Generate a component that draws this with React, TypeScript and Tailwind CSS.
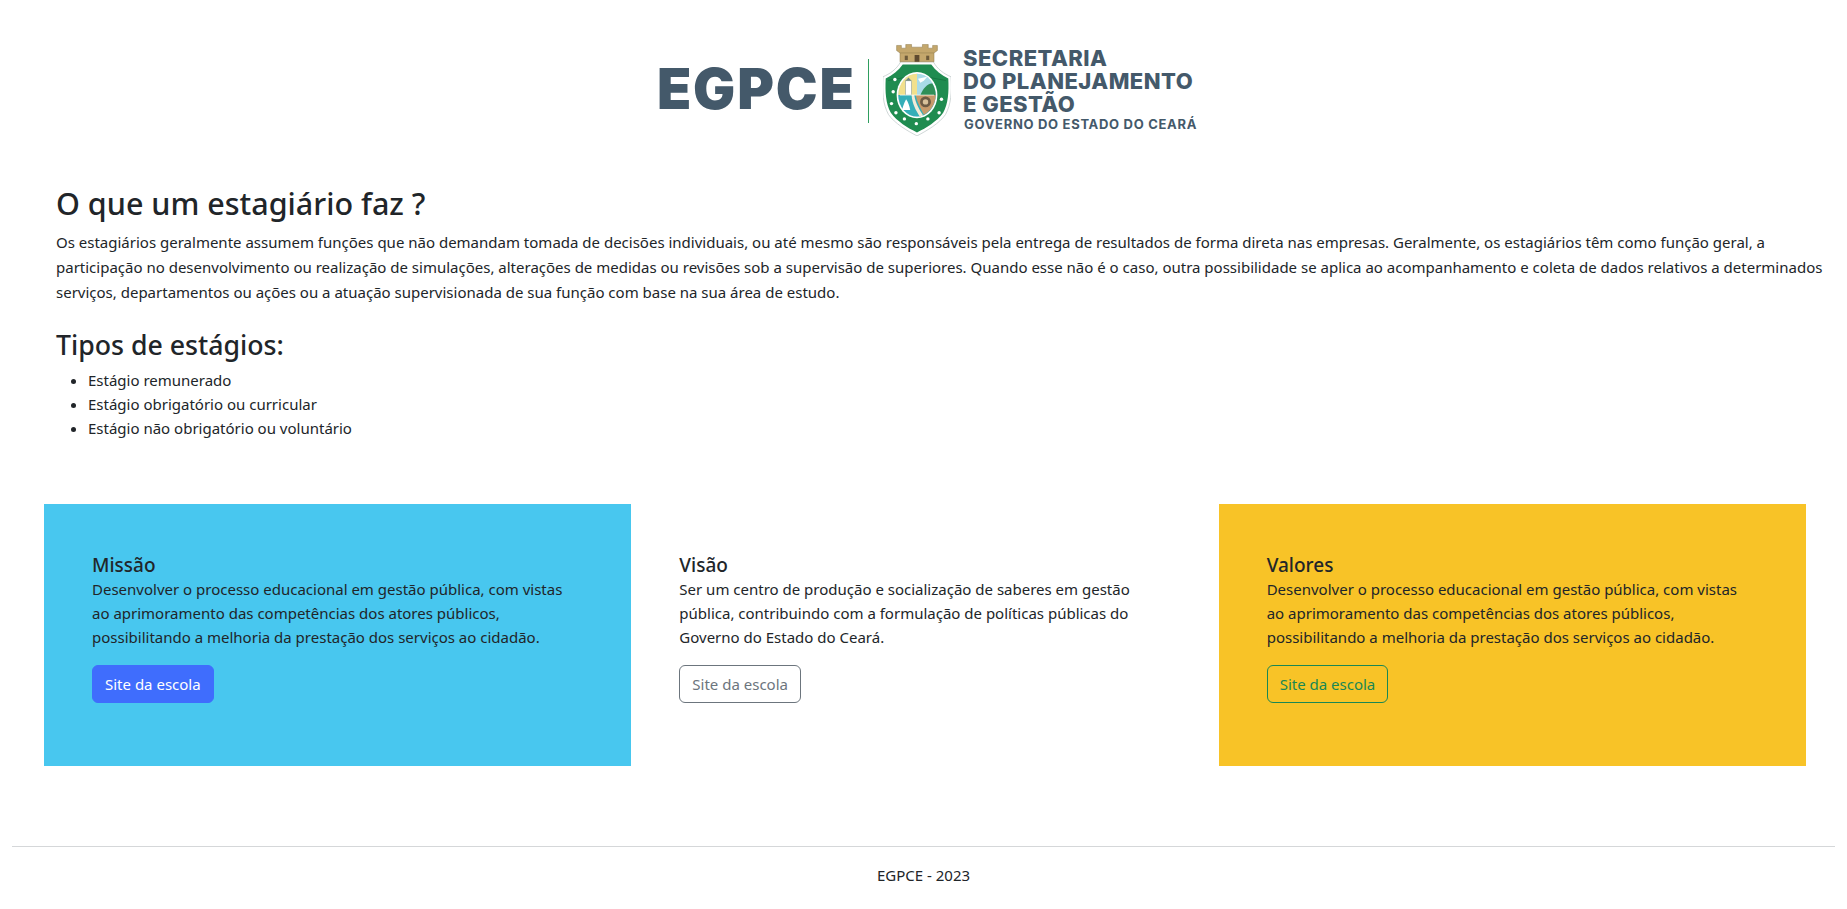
const font = { fontFamily: '"Noto Sans", "Open Sans", sans-serif' }

function Crest() {
  return (
    <svg width="68" height="92" viewBox="40 28 200 270" className="shrink-0">
      <path d="M40 124 C60 116 80 102 92 80 L188 80 C200 102 220 116 240 124 C243 170 240 205 224 235 C205 262 170 282 140 298 C110 282 75 262 56 235 C40 205 37 170 40 124 Z" fill="#fff" stroke="#b9c4c4" strokeWidth="2" />
      <path d="M48 129 C68 120 86 106 98 88 L182 88 C194 106 212 120 232 129 C234 170 232 202 217 230 C198 256 168 274 140 288 C112 274 82 256 63 230 C48 202 46 170 48 129 Z" fill="#1f8c50" />
      <path d="M55 135 L110 125 M225 135 L170 125" stroke="#156b3c" strokeWidth="2" />
      <path d="M80 32 L94 32 L94 40 L107 40 L107 29 L124 29 L124 37 L156 37 L156 29 L173 29 L173 40 L186 40 L186 32 L200 32 L200 47 L190 54 L190 80 L90 80 L90 54 L80 47 Z" fill="#c4a76c" stroke="#8f7a4c" strokeWidth="1.5" />
      <path d="M90 54 H190" stroke="#8f7a4c" strokeWidth="1.5" />
      <rect x="104" y="62" width="9" height="13" fill="#6d5a3a" />
      <rect x="133" y="60" width="14" height="20" fill="#5e4a30" />
      <rect x="167" y="62" width="9" height="13" fill="#6d5a3a" />
      <ellipse cx="140" cy="178" rx="60" ry="68" fill="#fff" />
      <ellipse cx="140" cy="178" rx="55" ry="63" fill="#bfe3e8" />
      <path d="M85 178 A55 63 0 0 1 140 115 L140 178 Z" fill="#f2e08c" />
      <path d="M140 115 A55 63 0 0 1 195 178 L140 178 Z" fill="#a9dbe8" />
      <path d="M150 178 C158 158 172 142 185 144 C192 155 195 166 195 178 Z" fill="#2f8f58" />
      <path d="M143 130 L170 124 L160 136 L150 142 Z" fill="#fff" />
      <rect x="106" y="136" width="18" height="42" fill="#fff" stroke="#7d8f8c" strokeWidth="1.5" />
      <path d="M106 136 L115 126 L124 136 Z" fill="#6f8a86" />
      <path d="M85 178 L195 178 A55 63 0 0 1 140 241 A55 63 0 0 1 85 178 Z" fill="#35aeb8" />
      <path d="M136 178 H195 C195 205 178 228 160 236 C150 215 140 200 136 178 Z" fill="#c69a6b" />
      <path d="M132 178 C136 205 148 222 158 238 L148 241 C136 222 126 204 124 178 Z" fill="#f3ead6" />
      <circle cx="165" cy="198" r="16" fill="#6d5a44" />
      <circle cx="165" cy="198" r="8" fill="#d8c09a" />
      <path d="M108 190 C100 205 98 216 96 222 L120 222 C118 210 114 198 108 190 Z" fill="#fff" />
      <path d="M90 178 L190 178" stroke="#fff" strokeWidth="2" />
      <g fill="#fff">
        <circle cx="75" cy="132" r="5" />
        <circle cx="70" cy="168" r="5" />
        <circle cx="65" cy="203" r="5" />
        <circle cx="78" cy="230" r="5" />
        <circle cx="103" cy="248" r="5" />
        <circle cx="138" cy="262" r="5" />
        <circle cx="172" cy="248" r="5" />
        <circle cx="205" cy="230" r="5" />
        <circle cx="212" cy="190" r="5" />
      </g>
    </svg>
  )
}

function Logo() {
  return (
    <div className="flex pl-[657px] pt-[44px] h-[135px]">
      <span className="mt-[17px] w-[194px] whitespace-nowrap text-[#44596a] font-black text-[56px] leading-[56px] tracking-[1.8px]" style={{ fontFamily: 'Inter, sans-serif' }}>
        EGPCE
      </span>
      <div className="w-px h-[64px] mt-[15px] ml-[17px] mr-[14px] bg-[#2f9e5f]" />
      <Crest />
      <div className="ml-[12px] text-[#44596a] font-extrabold whitespace-nowrap" style={{ fontFamily: 'Inter, sans-serif' }}>
        <div className="text-[22px] leading-[23px] mt-[3px] tracking-[0.45px]">SECRETARIA</div>
        <div className="text-[22px] leading-[23px] tracking-[0.45px]">DO PLANEJAMENTO</div>
        <div className="text-[22px] leading-[23px] tracking-[0.45px]">E GESTÃO</div>
        <div className="text-[13px] leading-[16px] font-bold ml-[1px] tracking-[0.7px]">GOVERNO DO ESTADO DO CEARÁ</div>
      </div>
    </div>
  )
}

function Card({ title, lines, bg, button }: { title: string; lines: string[]; bg: string; button: string }) {
  return (
    <div className={`flex-1 h-[262px] px-[48px] pt-[50px] ${bg}`}>
      <h5 className="text-[19px] leading-[23px] font-medium">{title}</h5>
      <p className="text-[15px] leading-[24px]">
        {lines.map((l) => (
          <span key={l} className="block whitespace-nowrap">{l}</span>
        ))}
      </p>
      <a className={`inline-block mt-[16px] h-[38px] px-[12px] leading-[36px] text-[15px] rounded-[6px] border ${button}`}>
        Site da escola
      </a>
    </div>
  )
}

const missao = [
  'Desenvolver o processo educacional em gestão pública, com vistas',
  'ao aprimoramento das competências dos atores públicos,',
  'possibilitando a melhoria da prestação dos serviços ao cidadão.',
]

export default function App() {
  return (
    <div className="min-h-[909px] bg-white text-[#212529]" style={font}>
      <Logo />
      <section className="pl-[56px] pr-[10px] pt-[48px]">
        <h2 className="text-[30.5px] leading-[40px] font-medium">O que um estagiário faz ?</h2>
        <p className="mt-[7px] text-[15px] leading-[25px]">
          Os estagiários geralmente assumem funções que não demandam tomada de decisões individuais, ou até mesmo são responsáveis pela entrega de resultados de forma direta nas empresas. Geralmente, os estagiários têm como função geral, a participação no desenvolvimento ou realização de simulações, alterações de medidas ou revisões sob a supervisão de superiores. Quando esse não é o caso, outra possibilidade se aplica ao acompanhamento e coleta de dados relativos a determinados serviços, departamentos ou ações ou a atuação supervisionada de sua função com base na sua área de estudo.
        </p>
        <h3 className="mt-[23px] text-[26.7px] leading-[34px] font-medium">Tipos de estágios:</h3>
        <ul className="mt-[6px] list-disc pl-[32px] text-[15px] leading-[24px]">
          <li>Estágio remunerado</li>
          <li>Estágio obrigatório ou curricular</li>
          <li>Estágio não obrigatório ou voluntário</li>
        </ul>
      </section>
      <section className="flex mx-[44px] mt-[64px] w-[1762px]">
        <Card title="Missão" lines={missao} bg="bg-[#48c7ef]" button="bg-[#3f6dfd] border-[#3f6dfd] text-white" />
        <Card
          title="Visão"
          lines={[
            'Ser um centro de produção e socialização de saberes em gestão',
            'pública, contribuindo com a formulação de políticas públicas do',
            'Governo do Estado do Ceará.',
          ]}
          bg="bg-white"
          button="border-[#6c757d] text-[#6c757d]"
        />
        <Card title="Valores" lines={missao} bg="bg-[#f8c327]" button="border-[#198754] text-[#198754]" />
      </section>
      <hr className="mx-[12px] mt-[80px] border-t border-[#d5d7d9]" />
      <footer className="pt-[16px] text-center text-[15px] leading-[24px]">EGPCE - 2023</footer>
    </div>
  )
}
